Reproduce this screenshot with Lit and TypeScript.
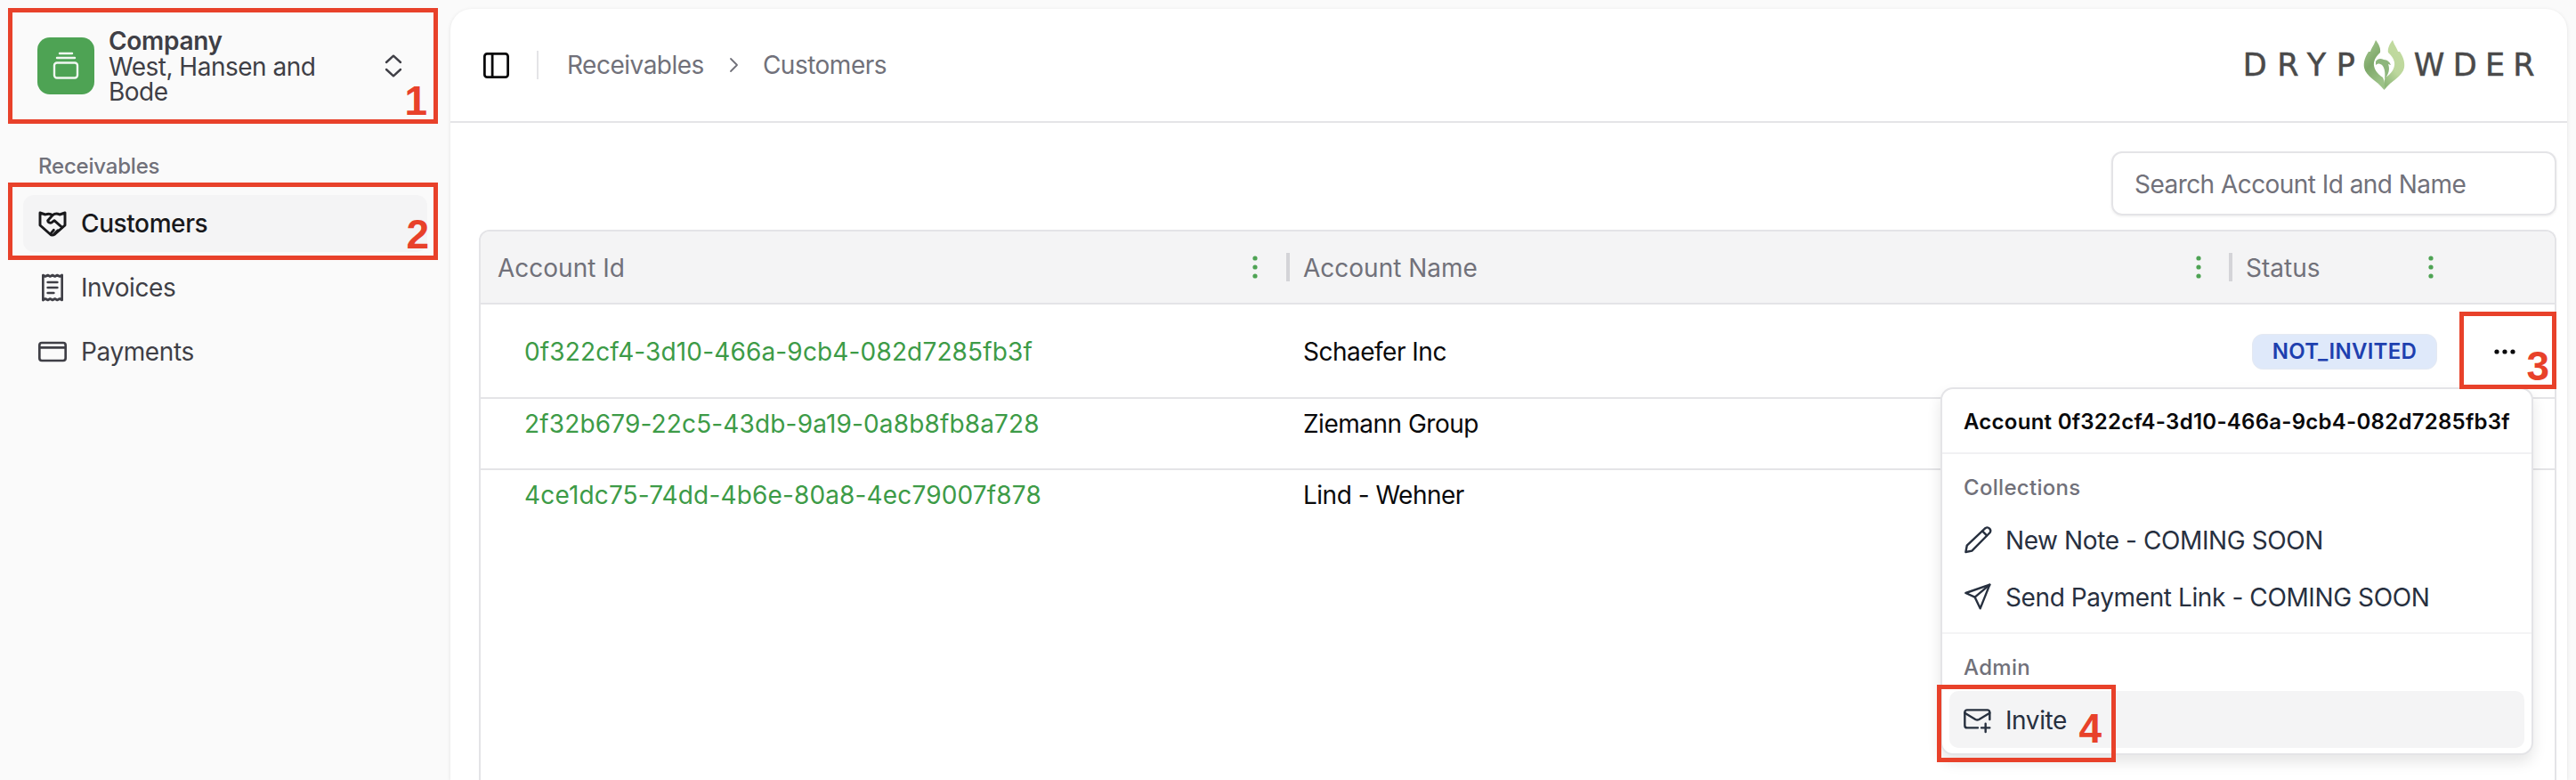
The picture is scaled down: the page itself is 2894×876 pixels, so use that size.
import { LitElement, html, css, svg } from "lit";
import { customElement } from "lit/decorators.js";

const ic = (size: number, inner: unknown, sw = 2) => html`<svg class="ic" width=${size} height=${size} viewBox="0 0 24 24" fill="none" stroke="currentColor" stroke-width=${sw} stroke-linecap="round" stroke-linejoin="round">${inner}</svg>`;

const handshake = svg`<path d="M1.5 3 L6 4.5 C8.5 3.5 10 3.5 12 5 C14 3.5 16 3.5 18 4.5 L22.5 3 L22.5 13.5 L14 21 C12.5 22 11 22 10 21 L1.5 13.5 Z"/><path d="M12 5 L8 9.5 C8 11 10 12 11.5 11 L13.5 9.5 L20 15.2"/><path d="M10.5 20.5 L13 17.5 M13.8 20.5 L16.5 17.8"/>`;
const receipt = svg`<path d="M4 1.5 L6 2.6 L8 1.5 L10 2.6 L12 1.5 L14 2.6 L16 1.5 L18 2.6 L20 1.5 V22.5 L18 21.4 L16 22.5 L14 21.4 L12 22.5 L10 21.4 L8 22.5 L6 21.4 L4 22.5 Z"/><path d="M8 7.5 H16 M8 12 H16 M8 16.5 H13"/>`;
const card = svg`<rect x="1" y="4.5" width="22" height="15" rx="2"/><path d="M1 8.5 H23"/>`;
const pencil = svg`<path d="M18.5 2.2 a2.8 2.8 0 0 1 3.8 3.8 L7 21.5 L1.8 22.5 L2.8 17 Z"/><path d="M16 5 L19.5 8.5"/>`;
const send = svg`<path d="M22 2 L1.8 9 L9.5 12.5 L14 22 Z"/><path d="M22 2 L9.5 12.5"/>`;
const mailPlus = svg`<path d="M22 12 V6 a2 2 0 0 0 -2 -2 H3 a2 2 0 0 0 -2 2 V17 a2 2 0 0 0 2 2 H12"/><path d="M22 6.5 L13 12 a3 3 0 0 1 -3 0 L1 6.5"/><path d="M18.5 15.5 V22.5 M15 19 H22"/>`;

const Dots = html`<svg class="dots" width="6" height="26" viewBox="0 0 6 26"><circle cx="3" cy="3" r="2.6"/><circle cx="3" cy="13" r="2.6"/><circle cx="3" cy="23" r="2.6"/></svg>`;

@customElement("app-root")
export class AppRoot extends LitElement {
  static styles = css`
    :host { display: block; position: relative; width: 2894px; height: 876px; overflow: hidden; background: #fafafa; font-family: Inter, "Liberation Sans", sans-serif; font-size: 28px; color: #09090b; }
    * { box-sizing: border-box; }
    .ic { overflow: visible; flex: none; display: block; }
    .shell { display: flex; height: 876px; }
    .side { width: 506px; flex: none; padding: 31px 26px 0; }
    .team { display: flex; align-items: center; padding-left: 16px; }
    .team-logo { width: 64px; height: 64px; border-radius: 14px; background: #4ea354; color: #f1f7f1; flex: none; display: flex; align-items: center; justify-content: center; }
    .team-text { margin-left: 16px; width: 271px; color: #3f3f46; line-height: 28px; letter-spacing: -.5px; }
    .team-text b { display: block; font-weight: 600; line-height: 30px; letter-spacing: -.3px; }
    .chev { margin-left: 33px; color: #3f3f46; display: flex; }
    .group-label { margin: 54px 0 16px 17px; height: 32px; line-height: 32px; font-size: 24px; font-weight: 500; color: #71717a; letter-spacing: -.2px; }
    .nav { display: flex; flex-direction: column; gap: 8px; }
    .nav-item { display: flex; align-items: center; gap: 16px; height: 64px; padding-left: 17px; border-radius: 12px; color: #3f3f46; letter-spacing: -.4px; }
    .nav-item.on { background: #f4f4f5; color: #18181b; font-weight: 500; }
    .main { flex: 1; margin: 10px 10px 0 0; background: #fff; border-radius: 24px 24px 0 0; box-shadow: 0 1px 4px rgba(0,0,0,.10); display: flex; flex-direction: column; min-width: 0; }
    .top { height: 128px; border-bottom: 2px solid #e4e4e7; display: flex; align-items: center; padding: 0 27px 0 34px; color: #71717a; flex: none; }
    .sb-btn { color: #09090b; display: flex; }
    .vr { width: 2px; height: 32px; background: #e4e4e7; margin: 0 32px 0 28px; }
    .crumbs { display: flex; align-items: center; gap: 21px; flex: 1; letter-spacing: -.5px; }
    .brand { display: flex; align-items: center; font-family: "DejaVu Sans", sans-serif; font-size: 35px; color: #4a4a4a; height: 60px; -webkit-text-stroke: .5px #4a4a4a; }
    .brand .l { letter-spacing: 11.5px; }
    .brand .r { letter-spacing: 9.3px; }
    .brand svg { margin: 0 10px 0 -2.5px; display: block; }
    .content { flex: 1; padding: 32px 12px 0 32px; display: flex; flex-direction: column; min-height: 0; }
    .search { align-self: flex-end; width: 500px; height: 72px; border: 2px solid #e4e4e7; border-radius: 12px; box-shadow: 0 1px 3px rgba(0,0,0,.08); display: flex; align-items: center; padding: 2px 0 0 24px; color: #71717a; flex: none; letter-spacing: -.55px; }
    .table { margin-top: 16px; flex: 1; border: 2px solid #e4e4e7; border-bottom: 0; border-radius: 12px 12px 0 0; overflow: hidden; }
    .row { display: grid; grid-template-columns: 904px 1060px 1fr; }
    .head { height: 82px; background: #f4f4f5; border-bottom: 2px solid #e4e4e7; color: #71717a; align-items: center; }
    .th { display: flex; align-items: center; justify-content: space-between; height: 32px; }
    .th span { padding-top: 2px; }
    .th.first { padding: 0 31px 0 19px; }
    .th.mid { border-left: 4px solid #d4d4d8; padding: 0 31px 0 15px; margin-left: 1px; }
    .th.last { border-left: 4px solid #d4d4d8; padding: 0 136px 0 15px; }
    .dots { fill: #4ea354; display: block; }
    .cell { padding-top: 14px; height: 80px; line-height: 28px; border-bottom: 2px solid #e4e4e7; }
    .cell.id { padding-left: 49px; color: #3d9b47; letter-spacing: .15px; }
    .cell.name { padding-left: 20px; letter-spacing: -.5px; }
    .r1 .cell { height: 106px; padding-top: 2px; display: flex; align-items: center; }
    .r1 .cell.st { padding-left: 26px; gap: 64px; }
    .plain .cell { border-bottom: 0; }
    .badge { height: 40px; width: 208px; background: #dfe9fa; border: 1px solid #e4e9f2; border-radius: 12px; color: #1e40af; font-size: 24px; font-weight: 600; display: flex; align-items: center; justify-content: center; letter-spacing: .3px; }
    .more { display: flex; color: #09090b; }
    .menu { position: absolute; left: 2180px; top: 435px; width: 666px; height: 413px; background: #fff; border: 2px solid #e4e4e7; border-radius: 14px; box-shadow: 0 8px 16px rgba(0,0,0,.10); }
    .menu-title { height: 73px; border-bottom: 2px solid #f1f1f3; font-size: 24px; font-weight: 600; padding: 2px 0 0 24px; display: flex; align-items: center; color: #09090b; letter-spacing: .26px; }
    .menu-sec { padding: 8px; }
    .menu-sec + .menu-sec { border-top: 2px solid #f4f4f5; }
    .menu-label { font-size: 24px; font-weight: 500; color: #71717a; height: 56px; display: flex; align-items: center; padding: 2px 0 0 16px; letter-spacing: .3px; }
    .menu-item { height: 64px; display: flex; align-items: center; gap: 15px; padding-left: 16px; border-radius: 10px; color: #27303f; letter-spacing: -.4px; }
    .menu-item span { padding-top: 2px; }
    .menu-item.hl { background: #f4f4f5; }
    .mark { position: absolute; border: 5px solid #e8412a; pointer-events: none; }
    .mark span { position: absolute; font: 700 46px/46px "Liberation Sans", Arial, sans-serif; color: #e8412a; }
    .m1 { left: 9px; top: 9px; width: 483px; height: 130px; }
    .m1 span { right: 7px; top: 76px; }
    .m2 { left: 9px; top: 205px; width: 483px; height: 87px; }
    .m2 span { right: 5px; top: 30px; }
    .m3 { left: 2763px; top: 350px; width: 109px; height: 87px; }
    .m3 span { right: 3px; top: 33px; }
    .m4 { left: 2176px; top: 769px; width: 201px; height: 87px; }
    .m4 span { right: 11px; top: 21px; }
  `;

  render() {
    return html`
      <div class="shell">
        <aside class="side">
          <div class="team">
            <div class="team-logo">
              <svg width="30" height="32" viewBox="0 0 30 32" fill="none" stroke="currentColor" stroke-width="2.4" stroke-linecap="round"><path d="M8 2 H22 M5 7 H25"/><rect x="2" y="12.5" width="26" height="17" rx="3"/></svg>
            </div>
            <div class="team-text"><b>Company</b>West, Hansen and Bode</div>
            <div class="chev">${ic(32, svg`<path d="M6 9 L12 3.5 L18 9 M6 15 L12 20.5 L18 15"/>`, 1.8)}</div>
          </div>
          <div class="group-label">Receivables</div>
          <nav class="nav">
            <div class="nav-item on">${ic(32, handshake, 2.2)}<span>Customers</span></div>
            <div class="nav-item">${ic(32, receipt, 2)}<span>Invoices</span></div>
            <div class="nav-item">${ic(32, card, 2)}<span>Payments</span></div>
          </nav>
        </aside>
        <main class="main">
          <header class="top">
            <div class="sb-btn">${ic(35, svg`<rect x="3" y="3" width="18" height="18" rx="2"/><path d="M9 3 V21"/>`, 1.9)}</div>
            <div class="vr"></div>
            <div class="crumbs"><span>Receivables</span>${ic(24, svg`<path d="M9 5 L16 12 L9 19"/>`, 1.8)}<span>Customers</span></div>
            <div class="brand"><span class="l">DRYP</span>
              <svg width="47" height="56" viewBox="0 0 47 56">
                <defs>
                  <linearGradient id="fl" x1="0" y1="0" x2="0.4" y2="1"><stop offset="0" stop-color="#a9cb93"/><stop offset=".55" stop-color="#7ea86a"/><stop offset="1" stop-color="#9cc287"/></linearGradient>
                  <linearGradient id="fr" x1="0.8" y1="0" x2="0.3" y2="1"><stop offset="0" stop-color="#c3dba0"/><stop offset=".6" stop-color="#bcd79c"/><stop offset="1" stop-color="#8fb87a"/></linearGradient>
                </defs>
                <path fill="url(#fl)" d="M14 0 C12 6 9 9 8 13 L6 13 C2 19 0 25 1 31 C3 41 15 45 23.5 56 C24 50 24 46 22 42 C16 38 11 32 12 25 C13 20 16 17 19 14 C20 9 17 4 14 0 Z"/>
                <path fill="url(#fr)" d="M33 0 C35 6 38 9 39 13 L41 13 C45 19 47 25 46 31 C44 41 32 45 23.5 56 C23 50 23 46 25 42 C31 38 36 32 35 25 C34 20 31 17 28 14 C27 9 30 4 33 0 Z"/>
                <path fill="#8db67c" d="M14 24 C16 21 19 20 23 22 C27 22 30 25 31 28 L28 27 C30 32 29 38 24 44 C25 37 24 31 21 28 C18 26 16 26 14 28 Z"/>
              </svg>
              <span class="r">WDER</span></div>
          </header>
          <section class="content">
            <div class="search">Search Account Id and Name</div>
            <div class="table">
              <div class="row head">
                <div class="th first"><span>Account Id</span>${Dots}</div>
                <div class="th mid"><span>Account Name</span>${Dots}</div>
                <div class="th last"><span>Status</span>${Dots}</div>
              </div>
              <div class="row r1">
                <div class="cell id">0f322cf4-3d10-466a-9cb4-082d7285fb3f</div>
                <div class="cell name">Schaefer Inc</div>
                <div class="cell st"><div class="badge">NOT_INVITED</div><div class="more"><svg width="24" height="6" viewBox="0 0 24 6" fill="currentColor"><circle cx="3" cy="3" r="2.6"/><circle cx="12" cy="3" r="2.6"/><circle cx="21" cy="3" r="2.6"/></svg></div></div>
              </div>
              <div class="row">
                <div class="cell id">2f32b679-22c5-43db-9a19-0a8b8fb8a728</div>
                <div class="cell name">Ziemann Group</div>
                <div class="cell"></div>
              </div>
              <div class="row plain">
                <div class="cell id">4ce1dc75-74dd-4b6e-80a8-4ec79007f878</div>
                <div class="cell name">Lind - Wehner</div>
                <div class="cell"></div>
              </div>
            </div>
          </section>
        </main>
      </div>
      <div class="menu">
        <div class="menu-title">Account 0f322cf4-3d10-466a-9cb4-082d7285fb3f</div>
        <div class="menu-sec">
          <div class="menu-label">Collections</div>
          <div class="menu-item">${ic(32, pencil, 1.8)}<span>New Note - COMING SOON</span></div>
          <div class="menu-item">${ic(32, send, 1.8)}<span>Send Payment Link - COMING SOON</span></div>
        </div>
        <div class="menu-sec">
          <div class="menu-label">Admin</div>
          <div class="menu-item hl">${ic(32, mailPlus, 1.8)}<span>Invite</span></div>
        </div>
      </div>
      <div class="mark m1"><span>1</span></div>
      <div class="mark m2"><span>2</span></div>
      <div class="mark m3"><span>3</span></div>
      <div class="mark m4"><span>4</span></div>
    `;
  }
}
